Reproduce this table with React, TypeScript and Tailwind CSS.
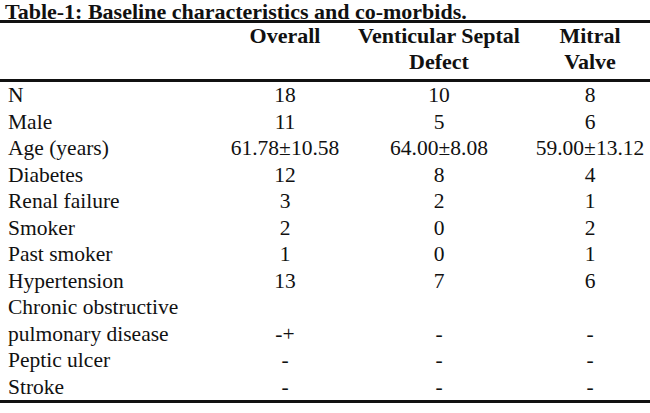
import React from 'react';

type Row = { label: React.ReactNode; overall: string; vsd: string; mv: string; tall?: boolean };

const rows: Row[] = [
  { label: 'N', overall: '18', vsd: '10', mv: '8' },
  { label: 'Male', overall: '11', vsd: '5', mv: '6' },
  { label: 'Age (years)', overall: '61.78±10.58', vsd: '64.00±8.08', mv: '59.00±13.12' },
  { label: 'Diabetes', overall: '12', vsd: '8', mv: '4' },
  { label: 'Renal failure', overall: '3', vsd: '2', mv: '1' },
  { label: 'Smoker', overall: '2', vsd: '0', mv: '2' },
  { label: 'Past smoker', overall: '1', vsd: '0', mv: '1' },
  { label: 'Hypertension', overall: '13', vsd: '7', mv: '6' },
  {
    label: (
      <>
        Chronic obstructive
        <br />
        pulmonary disease
      </>
    ),
    overall: '-+',
    vsd: '-',
    mv: '-',
    tall: true,
  },
  { label: 'Peptic ulcer', overall: '-', vsd: '-', mv: '-' },
  { label: 'Stroke', overall: '-', vsd: '-', mv: '-' },
];

const cols = 'grid grid-cols-[222px_126px_182px_120px]';

export default function App() {
  return (
    <div
      className="h-[413px] w-[650px] overflow-hidden bg-white text-[21.5px] text-[#111]"
      style={{ fontFamily: '"Liberation Serif", "Times New Roman", serif' }}
    >
      <div className="h-[20px] whitespace-nowrap pl-[5px] text-[22px] font-bold leading-[24px]">
        Table-1: Baseline characteristics and co-morbids.
      </div>

      <div className="border-t-[3px] border-[#111]">
        <div className={`${cols} h-[56px] whitespace-nowrap text-[22px] font-bold leading-[26px]`}>
          <div />
          <div className="text-center">Overall</div>
          <div className="text-center">
            Venticular Septal
            <br />
            Defect
          </div>
          <div className="text-center">
            Mitral
            <br />
            Valve
          </div>
        </div>
      </div>

      <div className="border-y-[3px] border-[#111]">
        {rows.map((r, i) => (
          <div key={i} className={`${cols} ${r.tall ? 'h-[53px]' : 'h-[26.5px]'} whitespace-nowrap leading-[26.5px]`}>
            <div className="pl-[8px]">{r.label}</div>
            <div className="self-end text-center">{r.overall}</div>
            <div className="self-end text-center">{r.vsd}</div>
            <div className="self-end text-center">{r.mv}</div>
          </div>
        ))}
      </div>
    </div>
  );
}
